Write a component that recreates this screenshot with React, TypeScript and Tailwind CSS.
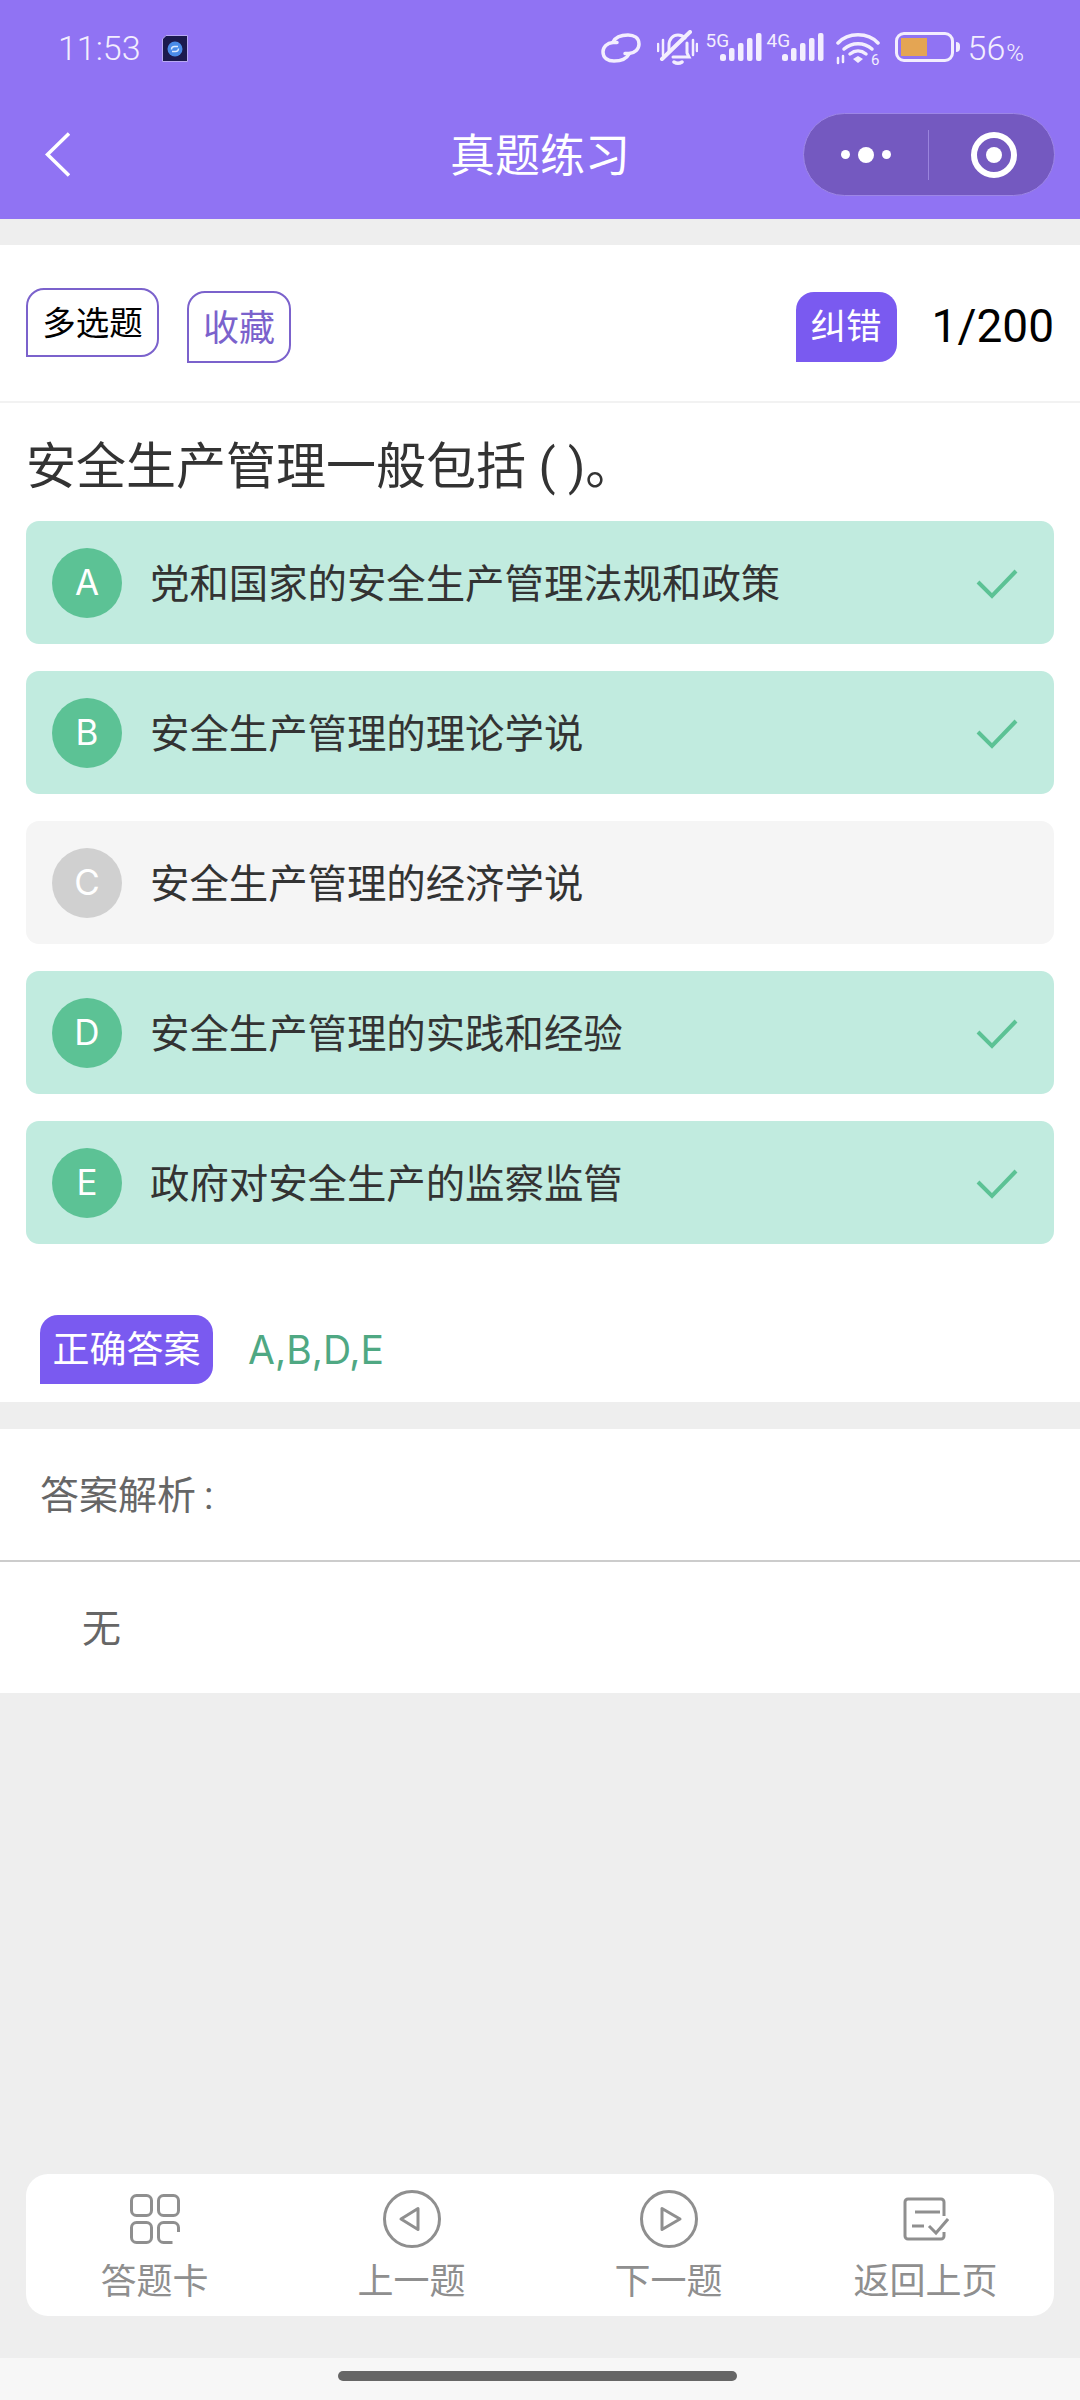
const options = [
  { key: 'A', text: '党和国家的安全生产管理法规和政策', ok: true },
  { key: 'B', text: '安全生产管理的理论学说', ok: true },
  { key: 'C', text: '安全生产管理的经济学说', ok: false },
  { key: 'D', text: '安全生产管理的实践和经验', ok: true },
  { key: 'E', text: '政府对安全生产的监察监管', ok: true },
];

function Bars() {
  return (
    <svg width="42" height="28" viewBox="0 0 42 28" fill="#f3eefe" className="block">
      <rect x="0" y="21" width="6" height="7" rx="2.500" />
      <rect x="9" y="15" width="5.500" height="13" rx="2" />
      <rect x="18" y="10" width="5.500" height="18" rx="2" />
      <rect x="27" y="5" width="5.500" height="23" rx="2" />
      <rect x="36" y="0" width="5.500" height="28" rx="2" />
    </svg>
  );
}

function StatusBar() {
  return (
    <div className="h-[113px] flex items-start justify-between pl-[58px] pr-[56px] pt-[30px] text-[#f3eefe]">
      <div className="flex items-center">
        <span className="text-[34px] leading-[36px] font-light w-[104px]">11:53</span>
        {/* notification app icon */}
        <svg width="26" height="27" viewBox="0 0 26 27">
          <path d="M4 0.500H25.500V26.500H0.500V4Z" fill="#1c1a4e" stroke="#b9a9f5" />
          <circle cx="13" cy="14" r="7.500" fill="#4a8be8" />
          <path d="M9.500 14.500a3 3 0 0 1 3-3h3.500M16.500 13.500a3 3 0 0 1-3 3h-3.500" stroke="#dceaff" strokeWidth="1.400" fill="none" />
        </svg>
      </div>
      <div className="flex items-start">
        {/* link */}
        <svg width="40" height="32" viewBox="0 0 40 32" fill="none" stroke="#f3eefe" strokeWidth="3.500" strokeLinecap="round" className="mr-[16px] mt-[2px]">
          <path d="M16 10.500H12C6 11 2 15 2 20c0 6 5 9 11 9 6 0 12-1 15-7" />
          <path d="M24 21.500h4c6-.5 10-4.500 10-9.500 0-6-5-9-11-9-6 0-12 1-15 7" />
        </svg>
        {/* muted bell */}
        <svg width="41" height="36" viewBox="0 0 41 36" fill="none" stroke="#f3eefe" strokeWidth="3" strokeLinecap="round" className="mr-[8px]">
          <path d="M12 21V15c0-6 4-10 9-10 3 0 5 1 7 3M30 13v10l2 4H16" />
          <path d="M17 32c3 2 5 2 8 0" strokeWidth="3.500" />
          <path d="M5 29L33 2" strokeWidth="4" />
          <path d="M1 14v7M6 10v15M36 10v15M40 14v7" strokeWidth="2.500" />
        </svg>
        <div className="relative w-[56px] h-[32px] mr-[5px]">
          <span className="absolute left-0 top-[1px] text-[19px] leading-[19px]">5G</span>
          <div className="absolute left-[14px] top-[3px]"><Bars /></div>
        </div>
        <div className="relative w-[57px] h-[32px] mr-[12px]">
          <span className="absolute left-0 top-[1px] text-[19px] leading-[19px]">4G</span>
          <div className="absolute left-[15px] top-[3px]"><Bars /></div>
        </div>
        {/* wifi */}
        <svg width="44" height="33" viewBox="0 0 44 33" fill="none" stroke="#f3eefe" strokeWidth="3.500" strokeLinecap="round" className="mr-[15px] mt-[2px]">
          <path d="M2 11C12 0 32 0 42 11" />
          <path d="M8 17c8-7 20-7 28 0" />
          <path d="M14 22c5-4 11-4 16 0" />
          <path d="M17 27l5-3 5 3-5 4z" fill="#f3eefe" stroke="none" />
          <path d="M2 26v5M7 30v-6" strokeWidth="2.500" />
          <text x="35" y="33" fontSize="15" fill="#f3eefe" stroke="none">6</text>
        </svg>
        {/* battery */}
        <div className="flex items-center mr-[8px] mt-[2px]">
          <div className="w-[59px] h-[30px] rounded-[9px] border-[3px] border-[#f3eefe] p-[3px] flex">
            <div className="w-[26px] bg-[#e4a553]" />
          </div>
          <div className="w-[4px] h-[10px] ml-[2px] rounded-r-full bg-[#f3eefe]" />
        </div>
        <span className="text-[34px] leading-[36px] font-light">56</span>
        <span className="text-[24px] leading-[24px] mt-[11px] ml-[1px] font-light">%</span>
      </div>
    </div>
  );
}

function NavBar() {
  return (
    <div className="relative h-[83px] flex items-center justify-end pr-[25px]">
      <button className="absolute left-[45px] top-[19px]">
        <svg width="25" height="45" viewBox="0 0 25 45" fill="none" stroke="#fff" strokeWidth="3.500" className="block">
          <path d="M24 1.500L2.500 22.500 24 43.500" />
        </svg>
      </button>
      <h1 className="absolute left-[450px] top-[16px] text-white text-[45px] leading-[56px]">真题练习</h1>
      <div className="w-[252px] h-[83px] rounded-full bg-[#7459c0] border border-[#9d86e6] flex items-center">
        <div className="w-[125px] h-[50px] border-r border-[#9a84dd] flex items-center justify-center gap-[8px]">
          <span className="w-[9px] h-[9px] rounded-full bg-white" />
          <span className="w-[16px] h-[16px] rounded-full bg-white" />
          <span className="w-[9px] h-[9px] rounded-full bg-white" />
        </div>
        <div className="flex-1 flex justify-center pl-[4px]">
          <div className="w-[46px] h-[46px] rounded-full border-[6px] border-white flex items-center justify-center">
            <span className="w-[16px] h-[16px] rounded-full bg-white" />
          </div>
        </div>
      </div>
    </div>
  );
}

function Option({ k, text, ok }: { k: string; text: string; ok: boolean }) {
  return (
    <div className={`h-[123px] rounded-[13px] flex items-center pl-[26px] pr-[36px] ${ok ? 'bg-[#c1ebdf]' : 'bg-[#f5f5f5]'}`}>
      <div className={`w-[70px] h-[70px] rounded-full flex items-center justify-center text-white text-[35px] font-[Inter,sans-serif] ${ok ? 'bg-[#5cc295]' : 'bg-[#d0d0d0]'}`}>
        {k}
      </div>
      <span className="ml-[28px] pt-[5px] flex-1 text-[39.400px] text-[#333]">{text}</span>
      {ok && (
        <svg width="42" height="32" viewBox="0 0 42 32" fill="none" stroke="#5cc295" strokeWidth="4" className="mt-[3px]">
          <path d="M2 14l14 14L40 3" />
        </svg>
      )}
    </div>
  );
}

function GridIcon() {
  return (
    <svg width="50" height="50" viewBox="0 0 50 50" fill="none" stroke="#8f8f8f" strokeWidth="3">
      <rect x="1.500" y="1.500" width="20" height="20" rx="5" />
      <rect x="28.500" y="1.500" width="20" height="20" rx="5" />
      <rect x="1.500" y="28.500" width="20" height="20" rx="5" />
      <path d="M48.500 38V33.500a5 5 0 0 0-5-5H33.500a5 5 0 0 0-5 5v10a5 5 0 0 0 5 5h9" />
    </svg>
  );
}

function PrevIcon() {
  return (
    <svg width="58" height="58" viewBox="0 0 58 58" fill="none" stroke="#8f8f8f" strokeWidth="3" strokeLinejoin="round">
      <circle cx="29" cy="29" r="27.500" />
      <path d="M18 29l17-10.500v21z" />
    </svg>
  );
}

function NextIcon() {
  return (
    <svg width="58" height="58" viewBox="0 0 58 58" fill="none" stroke="#8f8f8f" strokeWidth="3" strokeLinejoin="round">
      <circle cx="29" cy="29" r="27.500" />
      <path d="M40 29L22 18.500v21z" />
    </svg>
  );
}

function DocIcon() {
  return (
    <svg width="46" height="44" viewBox="0 0 46 44" fill="none" stroke="#8f8f8f" strokeWidth="3">
      <path d="M41 19V5a3 3 0 0 0-3-3H5a3 3 0 0 0-3 3v34a3 3 0 0 0 3 3h33a3 3 0 0 0 3-3v-4" />
      <path d="M12 15h25M9 29h12" />
      <path d="M26 29l7 7 12-14" />
    </svg>
  );
}

const tabs = [
  { label: '答题卡', icon: <GridIcon /> },
  { label: '上一题', icon: <PrevIcon /> },
  { label: '下一题', icon: <NextIcon /> },
  { label: '返回上页', icon: <DocIcon /> },
];

export default function App() {
  return (
    <div className="w-[1080px] h-[2400px] flex flex-col bg-[#eeeeee] font-[Roboto,'Noto_Sans_CJK_SC',sans-serif]">
      <div className="bg-[#9073f3] h-[219px] shrink-0">
        <StatusBar />
        <NavBar />
      </div>

      <div className="mt-[26px] bg-[#fff] pb-[18px]">
        {/* tag row */}
        <div className="h-[156px] border-b-2 border-[#f2f2f2] flex items-start px-[26px] box-content">
          <span className="mt-[43px] pt-[3px] h-[69px] w-[133px] rounded-[18px] rounded-bl-none border-2 border-[#7b62cc] flex items-center justify-center text-[33.500px] text-black">
            多选题
          </span>
          <span className="mt-[46px] pt-[3px] ml-[28px] h-[72px] w-[104px] rounded-[18px] rounded-bl-none border-2 border-[#7b62cc] flex items-center justify-center text-[36px] text-[#7b62cc]">
            收藏
          </span>
          <span className="mt-[47px] pt-[2px] ml-auto h-[70px] w-[101px] rounded-[18px] rounded-bl-none bg-[#7a5af0] flex items-center justify-center text-[35.500px] text-white">
            纠错
          </span>
          <span className="mt-[46px] ml-[35px] h-[70px] flex items-center text-[46px] text-black">1/200</span>
        </div>

        <h2 className="pl-[26px] pt-[37px] pb-[27px] text-[50px] leading-[54px] text-[#333]">
          安全生产管理一般包括 ( )。
        </h2>

        <div className="px-[26px] flex flex-col gap-[27px]">
          {options.map((o) => (
            <Option key={o.key} k={o.key} text={o.text} ok={o.ok} />
          ))}
        </div>

        <div className="mt-[71px] ml-[40px] flex items-center">
          <span className="pt-[2px] h-[69px] w-[173px] rounded-[18px] rounded-bl-none bg-[#7a5af0] flex items-center justify-center text-[37px] text-white">
            正确答案
          </span>
          <span className="ml-[35px] pt-[2px] text-[39px] font-[Inter,sans-serif] text-[#4fa883]">A,B,D,E</span>
        </div>
      </div>

      <div className="mt-[27px] bg-white text-[39px] text-[#666]">
        <div className="h-[133px] pt-[4px] flex items-center pl-[40px] border-b-2 border-[#cccccc]">
          答案解析<span className="ml-[8px]">:</span>
        </div>
        <div className="h-[131px] pt-[4px] flex items-center pl-[82px]">无</div>
      </div>

      <div className="flex-1 flex flex-col justify-end px-[26px] pb-[42px]">
        <div className="h-[142px] rounded-[22px] bg-white grid grid-cols-4">
          {tabs.map((t) => (
            <div key={t.label} className="flex flex-col items-center">
              <div className="h-[90px] flex items-center justify-center">{t.icon}</div>
              <span className="h-[34px] overflow-hidden text-[36px] leading-[36px] text-[#8f8f8f] whitespace-nowrap">{t.label}</span>
            </div>
          ))}
        </div>
      </div>

      <div className="h-[42px] bg-[#f7f7f7] flex justify-center pt-[13px] pr-[6px]">
        <div className="w-[399px] h-[10px] rounded-full bg-[#666666]" />
      </div>
    </div>
  );
}
